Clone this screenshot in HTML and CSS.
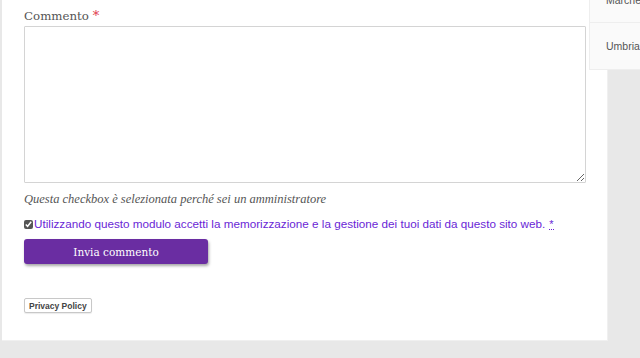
FILE: index.html
```html
<!DOCTYPE html>
<html lang="it">
<head>
  <meta charset="UTF-8" />
  <title>Commento</title>
  <link rel="stylesheet" href="styles.css">
</head>
<body>
  <div class="page">
    <div class="main">
      <form class="comment-form">
        <label class="field-label" for="comment">Commento <span class="req">*</span></label>
        <textarea id="comment" class="comment-box"></textarea>
        <p class="admin-note">Questa checkbox è selezionata perché sei un amministratore</p>
        <p class="consent">
          <input type="checkbox" checked />Utilizzando questo modulo accetti la memorizzazione e la gestione dei tuoi dati da questo sito web. <abbr class="consent-req" title="obbligatorio">*</abbr>
        </p>
        <button type="button" class="submit-btn">Invia commento</button>
      </form>
      <button type="button" class="privacy-btn">Privacy Policy</button>
    </div>

    <aside class="sidebar">
      <ul class="region-list">
        <li class="region-item region-cut">Marche</li>
        <li class="region-item">Umbria</li>
      </ul>
    </aside>
  </div>
</body>
</html>
```

FILE: styles.css
```css
html, body {
  margin: 0;
  padding: 0;
}
body {
  background: #e8e8e8;
  width: 640px;
  height: 358px;
  overflow: hidden;
  font-family: "DejaVu Serif", serif;
  color: #444;
}
.page {
  position: relative;
  height: 358px;
}
.main {
  margin-left: 2px;
  width: 606px;
  height: 341px;
  background: #fff;
  border-right: 1px solid #f0f0f0;
  border-bottom: 1px solid #f0f0f0;
  box-sizing: border-box;
  padding: 6px 0 0 22px;
}
.comment-form {
  width: 562px;
}
.field-label {
  display: block;
  font-size: 11.8px;
  line-height: 20px;
  color: #555;
}
.req {
  color: #e0384a;
  font-size: 13px;
}
.comment-box {
  display: block;
  width: 562px;
  height: 157px;
  margin: 0;
  border: 1px solid #d4d4d4;
  border-radius: 1px;
  box-sizing: border-box;
  resize: vertical;
}
.admin-note {
  margin: 7px 0 0;
  font-family: "Liberation Serif", serif;
  font-size: 12.5px;
  line-height: 18px;
  font-style: italic;
  color: #555;
}
.consent {
  margin: 8px 0 0;
  font-family: "Liberation Sans", Arial, sans-serif;
  font-size: 11.7px;
  line-height: 16px;
  color: #6a1fd6;
  white-space: nowrap;
  display: flex;
  align-items: center;
}
.consent input {
  width: 9px;
  height: 9px;
  margin: 0 1px 0 0;
  accent-color: #555;
}
.consent-req {
  margin-left: 4px;
  font-size: 11px;
  text-decoration: none;
  border-bottom: 1px dotted #6a1fd6;
  line-height: 10px;
}
.submit-btn {
  display: block;
  margin-top: 7px;
  width: 184px;
  height: 25px;
  border: none;
  border-radius: 3px;
  background: #6a2da2;
  color: #fff;
  font-family: "DejaVu Serif", serif;
  font-size: 10.5px;
  box-shadow: 1px 2px 3px rgba(0, 0, 0, 0.35);
  cursor: pointer;
}
.privacy-btn {
  display: block;
  margin-top: 34px;
  padding: 0 4px;
  height: 15px;
  border: 1px solid #c8c8c8;
  border-radius: 2px;
  background: #fff;
  color: #444;
  font-family: "Liberation Sans", Arial, sans-serif;
  font-weight: bold;
  font-size: 8.5px;
  box-shadow: 0 1px 1px rgba(0, 0, 0, 0.08);
}
.sidebar {
  position: absolute;
  top: 0;
  left: 589px;
  width: 51px;
  background: #fafafa;
  border-left: 1px solid #eee;
  border-bottom: 1px solid #eee;
}
.region-list {
  list-style: none;
  margin: 0;
  padding: 0;
}
.region-item {
  font-family: "Liberation Sans", Arial, sans-serif;
  font-size: 10.5px;
  color: #555;
  padding: 0 0 0 16px;
  height: 46px;
  line-height: 46px;
  white-space: nowrap;
}
.region-cut {
  height: 22px;
  line-height: 0px;
  border-bottom: 1px solid #eee;
}
```
